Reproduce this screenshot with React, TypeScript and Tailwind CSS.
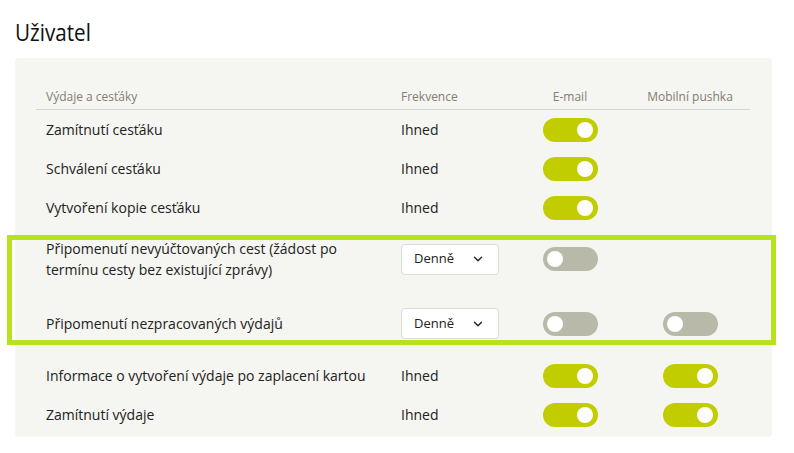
import { ChevronDown } from 'lucide-react'

type Row = {
  label: string
  freq: 'ihned' | 'select'
  email: boolean
  mobile?: boolean
}

const topRows: Row[] = [
  { label: 'Zamítnutí cesťáku', freq: 'ihned', email: true },
  { label: 'Schválení cesťáku', freq: 'ihned', email: true },
  { label: 'Vytvoření kopie cesťáku', freq: 'ihned', email: true },
]

const bottomRows: Row[] = [
  { label: 'Informace o vytvoření výdaje po zaplacení kartou', freq: 'ihned', email: true, mobile: true },
  { label: 'Zamítnutí výdaje', freq: 'ihned', email: true, mobile: true },
]

const grid = 'grid grid-cols-[355px_119px_120px_120px]'

function Toggle({ on }: { on: boolean }) {
  return (
    <div
      className={
        'relative h-6 w-[55px] rounded-full ' + (on ? 'bg-[#c2cd00]' : 'bg-[#b9b9aa]')
      }
    >
      <div
        className={
          'absolute top-1 h-4 w-4 rounded-full bg-white ' + (on ? 'right-[5px]' : 'left-1')
        }
      />
    </div>
  )
}

function Select() {
  return (
    <div className="flex h-[31px] w-[98px] items-center justify-between rounded-[4px] border border-[#deddd3] bg-white pl-3 pr-[13px] text-[13px] text-[#222]">
      <span>Denně</span>
      <ChevronDown size={14} strokeWidth={2.4} className="text-[#222]" />
    </div>
  )
}

function NotifRow({ row, h }: { row: Row; h: string }) {
  return (
    <div className={grid + ' items-center ' + h}>
      <div className="pl-[10px] pr-4 leading-[21px]">{row.label}</div>
      <div className="pl-[10px]">{row.freq === 'ihned' ? 'Ihned' : <Select />}</div>
      <div className="flex justify-center">
        <Toggle on={row.email} />
      </div>
      <div className="flex justify-center">
        {row.mobile !== undefined && <Toggle on={row.mobile} />}
      </div>
    </div>
  )
}

export default function App() {
  return (
    <div
      className="min-h-screen bg-white pl-[15px] pr-[22px] pt-[19px] text-[14px] text-[#222]"
      style={{ fontFamily: '"Open Sans", "Noto Sans", sans-serif' }}
    >
      <h1
        className="origin-left scale-x-[0.86] text-[24px] leading-[26px] text-[#111]"
        style={{ fontFamily: '"Open Sans", sans-serif' }}
      >
        Uživatel
      </h1>

      <div className="mt-[13px] rounded-[4px] bg-[#f5f5f1] pb-[3px] pl-[21px] pr-[22px] pt-[26px]">
        <div className={grid + ' border-b border-[#d7d6cc] pb-[4px] pt-[5px] text-[12px] leading-4 text-[#857d72]'}>
          <div className="pl-[10px]">Výdaje a cesťáky</div>
          <div className="pl-[10px]">Frekvence</div>
          <div className="text-center">E-mail</div>
          <div className="text-center">Mobilní pushka</div>
        </div>

        {topRows.map((r) => (
          <NotifRow key={r.label} row={r} h="h-[39px]" />
        ))}

        <div className="relative">
          <NotifRow
            row={{
              label: 'Připomenutí nevyúčtovaných cest (žádost po termínu cesty bez existující zprávy)',
              freq: 'select',
              email: false,
            }}
            h="h-[64px]"
          />
          <NotifRow
            row={{ label: 'Připomenutí nezpracovaných výdajů', freq: 'select', email: false, mobile: false }}
            h="h-[65px]"
          />
          <div className="pointer-events-none absolute -left-[29px] -right-[26px] bottom-[11px] top-[8px] border-[5px] border-[#b6e31c]" />
        </div>

        {bottomRows.map((r) => (
          <NotifRow key={r.label} row={r} h="h-[39px]" />
        ))}
      </div>
    </div>
  )
}
